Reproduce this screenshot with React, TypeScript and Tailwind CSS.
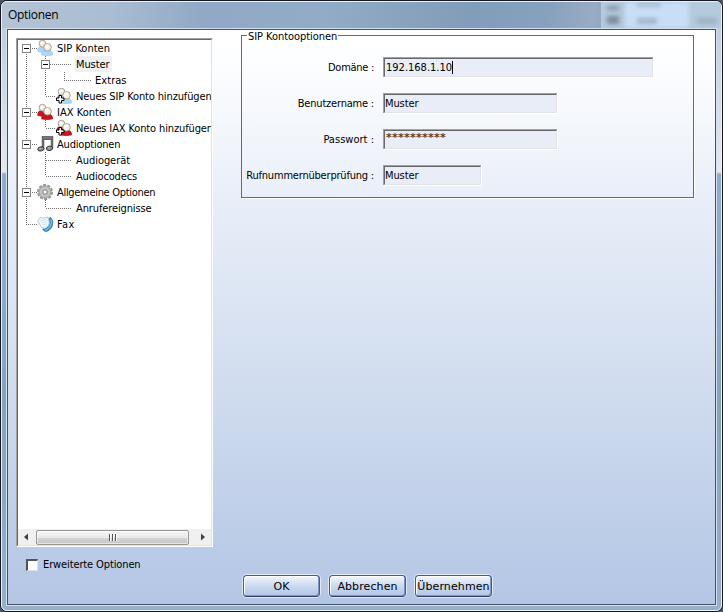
import React from "react";

type IconName = "blue" | "red" | "bluePlus" | "redPlus" | "music" | "gear" | "fax";

type Row = {
  label: string;
  level: number;
  icon?: IconName;
  box?: boolean;
  last?: boolean;
  inner?: "through" | "end";
  track: string;
  selected?: boolean;
};

const rows: Row[] = [
  { label: "SIP Konten", level: 0, icon: "blue", box: true, track: "tracking-[0.02px]" },
  { label: "Muster", level: 1, box: true, inner: "through", selected: true, track: "tracking-[-0.1px]" },
  { label: "Extras", level: 2, inner: "through", track: "tracking-[0.05px]" },
  { label: "Neues SIP Konto hinzufügen", level: 1, icon: "bluePlus", inner: "end", track: "tracking-[-0.13px]" },
  { label: "IAX Konten", level: 0, icon: "red", box: true, track: "tracking-[0.02px]" },
  { label: "Neues IAX Konto hinzufügen", level: 1, icon: "redPlus", inner: "end", track: "tracking-[-0.13px]" },
  { label: "Audioptionen", level: 0, icon: "music", box: true, track: "tracking-[-0.2px]" },
  { label: "Audiogerät", level: 1, inner: "through", track: "tracking-[-0.05px]" },
  { label: "Audiocodecs", level: 1, inner: "end", track: "tracking-[-0.15px]" },
  { label: "Allgemeine Optionen", level: 0, icon: "gear", box: true, track: "tracking-[-0.31px]" },
  { label: "Anrufereignisse", level: 1, inner: "end", track: "tracking-[-0.12px]" },
  { label: "Fax", level: 0, icon: "fax", last: true, track: "tracking-[0.4px]" },
];

function Expander({ x }: { x: number }) {
  return (
    <g>
      <rect x={x - 3.5} y="4.5" width="8" height="8" fill="#fff" stroke="#848484" />
      <path d={`M${x - 2} 8.5h5`} stroke="#000" />
    </g>
  );
}

function Guides({ row, first }: { row: Row; first: boolean }) {
  const width = row.level === 0 ? 19 : row.icon ? 38 : row.level === 1 ? 58 : 77;
  const dots = { stroke: "#707070", strokeDasharray: "1 1", fill: "none" };
  return (
    <svg width={width} height="16" className="shrink-0">
      {!row.last && <path d={first ? "M8.5 8v8" : "M8.5 0v16"} {...dots} />}
      {row.last && <path d="M8.5 0v8" {...dots} />}
      {row.level === 0 && <path d="M8 8.5h11" {...dots} />}
      {row.inner && <path d={row.inner === "end" ? "M27.5 0v8" : "M27.5 0v16"} {...dots} />}
      {row.level === 1 && <path d={row.icon ? "M28 8.5h10" : "M28 8.5h26"} {...dots} />}
      {row.level === 2 && <path d="M46.5 0v8.500M46 8.5h27" {...dots} />}
      {row.box && <Expander x={row.level === 0 ? 8 : 27} />}
    </svg>
  );
}

function Users({ body, dark, plus }: { body: string; dark: string; plus?: boolean }) {
  return (
    <g>
      <path d="M.6 11.500Q.2 7.800 3.500 6.300L8.500 7.500 9 12Q4 12.800.6 11.500Z" fill={body} stroke={dark} strokeWidth=".5" />
      <path d="M4.500 15Q4.200 11.300 7.500 10.300L13 10Q15.900 11.600 15.700 15Q10 16.300 4.500 15Z" fill={body} stroke={dark} strokeWidth=".5" />
      <circle cx="5.500" cy="3.700" r="3.400" fill="#f1e8da" stroke="#a39c91" strokeWidth=".9" />
      <circle cx="10.500" cy="7.300" r="3.800" fill="#f5ecdf" stroke="#a39c91" strokeWidth=".9" />
      <circle cx="9.800" cy="6.500" r="1.900" fill="#fffdf8" />
      <circle cx="4.900" cy="2.900" r="1.500" fill="#fffdf8" />
      {plus && (
        <path d="M3 7.500h2.500V10H8v2.500H5.500V15H3v-2.500H.5V10H3Z" fill="#fff" stroke="#000" />
      )}
    </g>
  );
}

function TreeIcon({ name }: { name: IconName }) {
  return (
    <svg width="16" height="16" viewBox="0 0 16 16" className="shrink-0 overflow-visible">
      {(name === "blue" || name === "bluePlus") && <Users body="#abd6fa" dark="#8ebfe9" plus={name === "bluePlus"} />}
      {(name === "red" || name === "redPlus") && <Users body="#c9161c" dark="#930e12" plus={name === "redPlus"} />}
      {name === "music" && (
        <g>
          <path d="M6 12.500V1.500H15V12" fill="none" stroke="#3a3a3a" strokeWidth="2.400" />
          <path d="M6 12V1.800H15V11.500" fill="none" stroke="#a0a0a0" strokeWidth=".9" />
          <path d="M7 2.700H14V4H7Z" fill="#666" />
          <ellipse cx="3.900" cy="12.900" rx="3.200" ry="2.100" fill="#909090" stroke="#333" strokeWidth=".9" transform="rotate(-12 3.900 12.900)" />
          <ellipse cx="12.500" cy="12.300" rx="3.200" ry="2.200" fill="#909090" stroke="#333" strokeWidth=".9" transform="rotate(-12 12.500 12.300)" />
          <path d="M2 12.500h2.200M11 11.900h2" stroke="#c9c9c9" strokeWidth=".8" />
        </g>
      )}
      {name === "gear" && (
        <g>
          <circle cx="8" cy="8" r="7" fill="none" stroke="#959595" strokeWidth="2" strokeDasharray="3 1.398" />
          <circle cx="8" cy="8" r="6.200" fill="#b4b4b4" stroke="#999" strokeWidth=".8" />
          <circle cx="8" cy="8" r="4.200" fill="none" stroke="#c9c9c9" strokeWidth="1.300" />
          <circle cx="8" cy="8" r="2.100" fill="#fff" stroke="#8b8b8b" />
        </g>
      )}
      {name === "fax" && (
        <g>
          <path d="M13.500 1.200Q17 5 15.500 9.500 13.500 14.800 8.500 15.700L5.800 13.700 6.300 12.500 8 12.800Q12 11 12.800 7.500 13 4.500 12 2.500Z" fill="#3c96cc" stroke="#256b9b" strokeWidth=".7" />
          <path d="M14 3.500q1.200 3-.5 6.200T8.500 14.300" fill="none" stroke="#95d4f1" strokeWidth=".9" />
          <path d="M.6 4.500L3.800 1 5.500 2.200 11 1 12.300 7 11.500 9.500 8 12.500 4.500 11.500Z" fill="#eff6f9" stroke="#9cc1d0" strokeWidth=".8" />
          <path d="M3.500 4.800l5-1M4.500 6.800l5-1M5.500 8.800l4-.8" stroke="#c6dfe8" strokeWidth=".7" />
        </g>
      )}
    </svg>
  );
}

function TreeRow({ row, first }: { row: Row; first: boolean }) {
  return (
    <div className="flex h-4 items-center">
      <Guides row={row} first={first} />
      {row.icon && (
        <div className="mr-1 flex">
          <TreeIcon name={row.icon} />
        </div>
      )}
      <span className={`h-4 pt-px leading-[15px] whitespace-nowrap ${row.track} ${row.selected ? "-ml-px bg-[#f0f0f0] pr-[3px] pl-px" : ""}`}>{row.label}</span>
    </div>
  );
}

const fields = [
  { label: "Domäne :", value: "192.168.1.10", width: "w-[270px]", caret: true, labelTrack: "tracking-[-0.28px]", text: "tracking-[0px] pl-px", pad: "pt-px" },
  { label: "Benutzername :", value: "Muster", width: "w-[174px]", labelTrack: "tracking-[-0.2px]", text: "tracking-[-0.1px]", pad: "pt-px" },
  { label: "Passwort :", value: "**********", width: "w-[174px]", labelTrack: "tracking-[0.02px]", text: "font-['DejaVu_Sans'] font-bold tracking-[0.25px] pl-px text-[#4f4238]", pad: "pb-[2px]" },
  { label: "Rufnummernüberprüfung :", value: "Muster", width: "w-[98px]", labelTrack: "tracking-[-0.2px]", text: "tracking-[-0.1px]", pad: "pt-px" },
];

function PushButton({ label }: { label: string }) {
  return (
    <button className="flex h-[22px] w-[77px] items-center justify-center rounded-[4px] border border-[#3d5c95] border-b-[#2b3f69] bg-linear-to-b from-[#f4f7fc] via-[#cbd9ef] to-[#b2c6e6] font-['DejaVu_Sans'] text-[11px] leading-none tracking-[0.1px] whitespace-nowrap shadow-[0_0_0_1px_#e4e9f1,inset_-1px_-1px_0_#7f96be,inset_1px_1px_0_#ffffff]">
      {label}
    </button>
  );
}

export default function App() {
  return (
    <div className="flex h-[612px] w-[723px] bg-[#4c5662] font-['DejaVu_Sans_Condensed','DejaVu_Sans',sans-serif] text-[11px] text-black">
      <div className="flex w-full flex-col rounded-[7px] border border-[#17181f] bg-linear-to-b from-[#9bb0cb] to-[#91abc8]">
        <div className="flex min-h-0 grow flex-col rounded-[6px] border border-[#eaf1f8] bg-[linear-gradient(180deg,#b8cadd_0,#e5e9ef_170px,#91abcb_172px,#8aa9cc_300px,#86a2bc_400px,#97afcd_100%)]">
          <header className="flex h-[26px] shrink-0 justify-between rounded-t-[5px] bg-[linear-gradient(100deg,#b5c3d5_0,#aabdd3_15%,#91a9c6_28%,#92abc7_45%,#829db9_65%,#87a2bf_76%,#9aabc4_82%,#8fa5bd_84%)] pl-[6px]">
            <h1 className="pt-px font-['Open_Sans'] text-[12px] leading-[24px] tracking-[-0.3px]">Optionen</h1>
            <div className="flex w-[120px] overflow-hidden rounded-tr-[5px] bg-[#b4cadd]">
              <div className="flex w-6 flex-col items-center justify-between pt-1 pb-1 blur-[2px]">
                <span className="h-1 w-3 bg-[#8393a2]" />
                <span className="h-2 w-3 bg-[#7b8c9c]" />
              </div>
              <div className="flex w-16 flex-col justify-between bg-[#c8def6] pt-px pb-1 pl-3 blur-[2px]">
                <span className="h-1 w-6 bg-[#a5bad0]" />
                <span className="h-1.5 w-5 bg-[#a0b6cc]" />
              </div>
              <div className="flex grow items-end pb-1 pl-2 blur-[2px]">
                <span className="h-1.5 w-5 bg-[#9bb2c2]" />
              </div>
            </div>
          </header>
          <div className="mr-[4px] mb-[4px] ml-[4px] flex min-h-0 grow border border-[#d5e2ee]">
            <main className="flex min-w-0 grow flex-col border border-[#47525f] bg-[linear-gradient(180deg,#ffffff_0,#fdfeff_30px,#e8eef8_175px,#ccd9ed_390px,#b3c6e5_100%)]">
              <div className="flex h-[517px] shrink-0 pt-2 pl-2">
                <section className="flex h-[509px] w-[197px] shrink-0 flex-col border-t border-r border-b border-l border-t-[#a0a0a0] border-r-white border-b-white border-l-[#a0a0a0]">
                  <div className="flex min-h-0 grow flex-col border border-t-[#696969] border-r-[#e3e3e3] border-b-[#e3e3e3] border-l-[#696969] bg-white">
                    <div className="flex min-h-0 grow flex-col overflow-hidden">
                      {rows.map((row, i) => (
                        <TreeRow key={row.label} row={row} first={i === 0} />
                      ))}
                    </div>
                    <div className="flex h-4 shrink-0 items-center bg-[#f0f0f0]">
                      <svg width="18" height="16">
                        <path d="M10 4.500v7L6 8Z" fill="#404040" />
                      </svg>
                      <div className="flex h-[15px] w-[153px] items-center justify-center gap-px rounded-[2px] border border-[#979797] bg-[linear-gradient(180deg,#f5f5f5_0,#e9e9eb_50%,#d6d6d8_51%,#c5c5c8_100%)] shadow-[inset_0_0_0_1px_#ffffff90]">
                        <span className="h-[7px] w-[2px] border-r border-white bg-[#555]" />
                        <span className="h-[7px] w-[2px] border-r border-white bg-[#555]" />
                        <span className="h-[7px] w-[2px] border-r border-white bg-[#555]" />
                      </div>
                      <svg width="22" height="16">
                        <path d="M12 4.500v7L16 8Z" fill="#404040" />
                      </svg>
                    </div>
                  </div>
                </section>
                <fieldset className="-mt-[9px] ml-7 flex h-[169px] w-[453px] flex-col border border-[#4b6ca8] shadow-[1px_1px_0_#ffffff]">
                  <legend className="ml-[5px] h-[13px] px-px leading-[15px] tracking-[-0.05px]">SIP Kontooptionen</legend>
                  <div className="flex flex-col gap-4 pt-[15px]">
                    {fields.map((f) => (
                      <label key={f.label} className="flex h-5 items-center">
                        <span className={`mr-[9px] w-[132px] shrink-0 pt-px text-right leading-5 whitespace-nowrap ${f.labelTrack}`}>{f.label}</span>
                        <span className={`flex h-5 border-t border-l border-[#a0a0a0] shadow-[1px_1px_0_#ffffff] ${f.width}`}>
                          <span className={`flex grow items-center border border-t-[#696969] border-r-[#e3e3e3] border-b-[#e3e3e3] border-l-[#696969] bg-[#e8edf8] ${f.text}`}>
                            <span className={f.pad}>{f.value}</span>
                            {f.caret && <span className="h-[13px] w-px bg-black" />}
                          </span>
                        </span>
                      </label>
                    ))}
                  </div>
                </fieldset>
              </div>
              <label className="mt-[9px] ml-[18px] flex h-[18px] items-center gap-[5px] tracking-[-0.12px]">
                <span className="size-3 border-t-[2px] border-r border-b border-l-[2px] border-t-[#555] border-r-[#e3e3e3] border-b-[#e3e3e3] border-l-[#555] bg-white" />
                Erweiterte Optionen
              </label>
              <footer className="mt-px ml-[235px] flex gap-[9px]">
                <PushButton label="OK" />
                <PushButton label="Abbrechen" />
                <PushButton label="Übernehmen" />
              </footer>
            </main>
          </div>
        </div>
      </div>
    </div>
  );
}
